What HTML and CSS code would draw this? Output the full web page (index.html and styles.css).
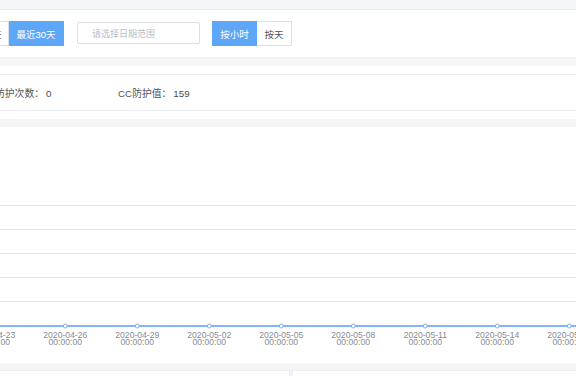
FILE: index.html
```html
<!DOCTYPE html>
<html lang="zh">
<head>
<meta charset="utf-8">
<link rel="stylesheet" href="styles.css">
</head>
<body>
<div class="page">
  <div class="toolbar">
    <div class="btn-group first">
      <div class="btn w49">最近7天</div>
      <div class="btn w55 active">最近30天</div>
    </div>
    <div class="date-input">请选择日期范围</div>
    <div class="btn-group">
      <div class="btn w45 active">按小时</div>
      <div class="btn w35">按天</div>
    </div>
  </div>

  <div class="stats-panel">
    <div class="stats">
      <div class="stat first">防护次数：<span class="val">0</span></div>
      <div class="stat">CC防护值：<span class="val">159</span></div>
    </div>
  </div>

  <div class="chart-panel">
    <svg class="chart" width="576" height="236" viewBox="0 0 576 236">
      <g class="grid">
        <line x1="0" y1="78.5" x2="576" y2="78.5"/>
        <line x1="0" y1="102.5" x2="576" y2="102.5"/>
        <line x1="0" y1="126.5" x2="576" y2="126.5"/>
        <line x1="0" y1="150.5" x2="576" y2="150.5"/>
        <line x1="0" y1="174.5" x2="576" y2="174.5"/>
      </g>
      <line class="series" x1="0" y1="199" x2="576" y2="199"/>
      <g class="markers">
        <circle cx="65.3" cy="199" r="2"/>
        <circle cx="137.3" cy="199" r="2"/>
        <circle cx="209.3" cy="199" r="2"/>
        <circle cx="281.3" cy="199" r="2"/>
        <circle cx="353.3" cy="199" r="2"/>
        <circle cx="425.3" cy="199" r="2"/>
        <circle cx="497.3" cy="199" r="2"/>
        <circle cx="569.3" cy="199" r="2"/>
      </g>
      <g class="labels">
        <text x="-6.7" y="210.6">2020-04-23</text><text x="-6.7" y="218.4">00:00:00</text>
        <text x="65.3" y="210.6">2020-04-26</text><text x="65.3" y="218.4">00:00:00</text>
        <text x="137.3" y="210.6">2020-04-29</text><text x="137.3" y="218.4">00:00:00</text>
        <text x="209.3" y="210.6">2020-05-02</text><text x="209.3" y="218.4">00:00:00</text>
        <text x="281.3" y="210.6">2020-05-05</text><text x="281.3" y="218.4">00:00:00</text>
        <text x="353.3" y="210.6">2020-05-08</text><text x="353.3" y="218.4">00:00:00</text>
        <text x="425.3" y="210.6">2020-05-11</text><text x="425.3" y="218.4">00:00:00</text>
        <text x="497.3" y="210.6">2020-05-14</text><text x="497.3" y="218.4">00:00:00</text>
        <text x="569.3" y="210.6">2020-05-17</text><text x="569.3" y="218.4">00:00:00</text>
      </g>
    </svg>
  </div>

  <div class="bottom-row">
    <div class="card left"></div>
    <div class="card right"></div>
  </div>
</div>
</body>
</html>
```

FILE: styles.css
```css
html, body {
  margin: 0;
  padding: 0;
}
body {
  width: 576px;
  height: 376px;
  overflow: hidden;
  background: #f4f5f7;
  font-family: "Liberation Sans", "Noto Sans CJK SC", sans-serif;
}
.page {
  padding-top: 9px;
}
.toolbar {
  background: #fff;
  border-top: 1px solid #e8eaee;
  border-bottom: 1px solid #eef0f3;
  height: 36px;
  padding-top: 11px;
  display: flex;
  align-items: flex-start;
}
.btn-group {
  display: flex;
}
.btn-group.first {
  margin-left: -40px;
}
.btn {
  box-sizing: border-box;
  height: 25px;
  border: 1px solid #dcdfe6;
  background: #fff;
  color: #4f535b;
  font-size: 9.5px;
  display: flex;
  align-items: center;
  justify-content: center;
  white-space: nowrap;
}
.btn + .btn {
  border-left: none;
}
.btn.active {
  background: #5ea6f7;
  border-color: #5ea6f7;
  color: #fff;
}
.w49 { width: 49px; }
.w55 { width: 55px; }
.w45 { width: 45px; }
.w35 { width: 35px; }
.date-input {
  box-sizing: border-box;
  margin-left: 13px;
  margin-right: 12px;
  margin-top: 1px;
  width: 123px;
  height: 22px;
  border: 1px solid #dcdfe6;
  border-radius: 2px;
  padding-left: 14px;
  font-size: 9px;
  color: #b8bcc4;
  display: flex;
  align-items: center;
}
.stats-panel {
  margin-top: 8px;
  background: #fff;
  padding: 8px 0 8px;
}
.stats {
  box-sizing: border-box;
  height: 37px;
  border-top: 1px solid #eaedf2;
  border-bottom: 1px solid #eaedf2;
  display: flex;
  align-items: center;
  font-size: 9.8px;
  color: #50545c;
}
.stat {
  width: 119px;
  white-space: nowrap;
}
.stat.first {
  margin-left: -5px;
  width: 123px;
}
.val {
  margin-left: 2px;
  color: #454b56;
}
.chart-panel {
  margin-top: 8px;
  background: #fff;
  height: 236px;
}
.chart {
  display: block;
}
.grid line {
  stroke: #e4e4e4;
  stroke-width: 1;
}
.series {
  stroke: #5b9ef5;
  stroke-width: 1.6;
}
.markers circle {
  fill: #fff;
  stroke: #7fb0f5;
  stroke-width: 1;
}
.labels text {
  font-family: "Liberation Sans", sans-serif;
  font-size: 8.6px;
  fill: #868b94;
  text-anchor: middle;
}
.bottom-row {
  margin-top: 7px;
  display: flex;
  gap: 2px;
  height: 20px;
}
.card {
  background: #fff;
  border: 1px solid #eceef2;
  box-sizing: border-box;
  height: 20px;
}
.card.left {
  margin-left: -10px;
  width: 300px;
}
.card.right {
  flex: 1;
  margin-right: -10px;
}
```
